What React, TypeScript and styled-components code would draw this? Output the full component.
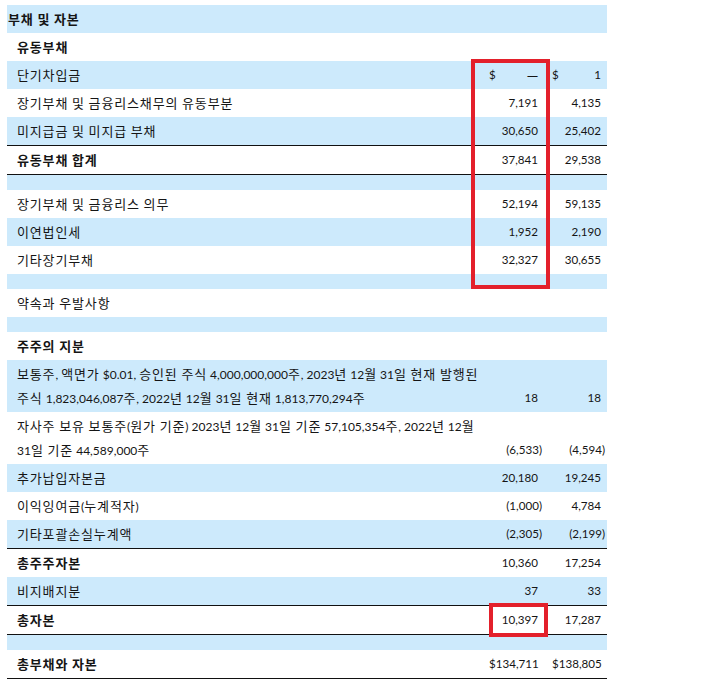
import styled, { createGlobalStyle, css } from "styled-components";

const GlobalStyle = createGlobalStyle`
  body {
    margin: 0;
    background: #ffffff;
    font-family: "Noto Sans CJK KR", "Noto Sans", sans-serif;
    color: #151515;
  }
`;

const BLUE = "#cdeafc";

type Row = {
  label?: string[];
  a?: string;
  b?: string;
  tone: "blue" | "white";
  bold?: boolean;
  top?: boolean;
  line?: "single" | "double";
  spacer?: boolean;
  dollar?: boolean;
};

const rows: Row[] = [
  { label: ["부채 및 자본"], tone: "blue", bold: true, top: true },
  { label: ["유동부채"], tone: "white", bold: true },
  { label: ["단기차입금"], a: "—", b: "1", tone: "blue", dollar: true },
  { label: ["장기부채 및 금융리스채무의 유동부분"], a: "7,191", b: "4,135", tone: "white" },
  { label: ["미지급금 및 미지급 부채"], a: "30,650", b: "25,402", tone: "blue", line: "single" },
  { label: ["유동부채 합계"], a: "37,841", b: "29,538", tone: "white", bold: true, line: "single" },
  { tone: "blue", spacer: true },
  { label: ["장기부채 및 금융리스 의무"], a: "52,194", b: "59,135", tone: "white" },
  { label: ["이연법인세"], a: "1,952", b: "2,190", tone: "blue" },
  { label: ["기타장기부채"], a: "32,327", b: "30,655", tone: "white" },
  { tone: "blue", spacer: true },
  { label: ["약속과 우발사항"], tone: "white" },
  { tone: "blue", spacer: true },
  { label: ["주주의 지분"], tone: "white", bold: true },
  {
    label: [
      "보통주, 액면가 $0.01, 승인된 주식 4,000,000,000주, 2023년 12월 31일 현재 발행된",
      "주식 1,823,046,087주, 2022년 12월 31일 현재 1,813,770,294주",
    ],
    a: "18",
    b: "18",
    tone: "blue",
  },
  {
    label: [
      "자사주 보유 보통주(원가 기준) 2023년 12월 31일 기준 57,105,354주, 2022년 12월",
      "31일 기준 44,589,000주",
    ],
    a: "(6,533)",
    b: "(4,594)",
    tone: "white",
  },
  { label: ["추가납입자본금"], a: "20,180", b: "19,245", tone: "blue" },
  { label: ["이익잉여금(누계적자)"], a: "(1,000)", b: "4,784", tone: "white" },
  { label: ["기타포괄손실누계액"], a: "(2,305)", b: "(2,199)", tone: "blue", line: "single" },
  { label: ["총주주자본"], a: "10,360", b: "17,254", tone: "white", bold: true },
  { label: ["비지배지분"], a: "37", b: "33", tone: "blue", line: "single" },
  { label: ["총자본"], a: "10,397", b: "17,287", tone: "white", bold: true, line: "single" },
  { tone: "blue", spacer: true },
  { label: ["총부채와 자본"], a: "$134,711", b: "$138,805", tone: "white", bold: true, line: "double" },
];

const Page = styled.div`
  padding: 5px 0 0 7px;
  position: relative;
`;

const Sheet = styled.div`
  width: 600px;
  display: flex;
  flex-direction: column;
`;

const RowBox = styled.div<{ $tone: "blue" | "white"; $line?: "single" | "double"; $spacer?: boolean }>`
  display: grid;
  grid-template-columns: 464px 79px 57px;
  background: ${(p) => (p.$tone === "blue" ? BLUE : "#ffffff")};
  min-height: ${(p) => (p.$spacer ? "15px" : "28px")};
  ${(p) =>
    p.$line === "single" &&
    css`
      border-bottom: 1px solid #111;
    `}
  ${(p) =>
    p.$line === "double" &&
    css`
      border-bottom: 4px double #111;
    `}
`;

const Label = styled.div<{ $bold?: boolean; $top?: boolean }>`
  padding: 2px 0 2px ${(p) => (p.$top ? "1px" : "10px")};
  font-size: 13px;
  line-height: 24px;
  font-weight: ${(p) => (p.$bold ? 700 : 400)};
  white-space: nowrap;
  letter-spacing: 0.85px;
  min-width: 0;
`;

const Line = styled.div`
  height: 24px;
`;

const Latin = styled.span`
  font-family: "Lato", "Noto Sans", sans-serif;
  font-size: 12px;
  letter-spacing: 0;
  line-height: 1;
`;

const Value = styled.div<{ $pad: number; $lead: number }>`
  display: flex;
  align-items: flex-end;
  justify-content: space-between;
  padding: 2px ${(p) => p.$pad}px 2px ${(p) => p.$lead}px;
  font-family: "Lato", "Noto Sans", sans-serif;
  font-size: 11.6px;
  line-height: 24px;
  color: #151515;
  white-space: nowrap;
`;

const Amount = styled.span<{ $neg?: boolean; $dash?: boolean }>`
  margin-left: auto;
  margin-right: ${(p) => (p.$neg ? "-4px" : "0")};
  ${(p) =>
    p.$dash &&
    css`
      font-family: "Noto Sans", sans-serif;
      font-size: 11px;
    `}
`;

const Mark = styled.div<{ $x: number; $y: number; $w: number; $h: number }>`
  position: absolute;
  left: ${(p) => p.$x}px;
  top: ${(p) => p.$y}px;
  width: ${(p) => p.$w}px;
  height: ${(p) => p.$h}px;
  border: 4px solid #e3202b;
  box-sizing: border-box;
  pointer-events: none;
`;

function Text({ value }: { value: string }) {
  const parts = value.split(/([\x20-\x7E]+)/).filter(Boolean);
  return (
    <Line>
      {parts.map((p, i) =>
        /^[\x20-\x7E]+$/.test(p) && /[^ ]/.test(p) ? <Latin key={i}>{p}</Latin> : <span key={i}>{p}</span>
      )}
    </Line>
  );
}

function Cell({ value, dollar, pad, lead }: { value?: string; dollar?: boolean; pad: number; lead: number }) {
  return (
    <Value $pad={pad} $lead={lead}>
      {dollar && <span>$</span>}
      {value && (
        <Amount $neg={value.startsWith("(")} $dash={value === "—"}>
          {value}
        </Amount>
      )}
    </Value>
  );
}

export default function App() {
  return (
    <>
      <GlobalStyle />
      <Page>
        <Sheet>
          {rows.map((r, i) => (
            <RowBox key={i} $tone={r.tone} $line={r.line} $spacer={r.spacer}>
              {r.spacer ? (
                <>
                  <div />
                  <div />
                  <div />
                </>
              ) : (
                <>
                  <Label $bold={r.bold} $top={r.top}>
                    {r.label?.map((l, j) => (
                      <Text key={j} value={l} />
                    ))}
                  </Label>
                  <Cell value={r.a} dollar={r.dollar} pad={12} lead={18} />
                  <Cell value={r.b} dollar={r.dollar} pad={6} lead={2} />
                </>
              )}
            </RowBox>
          ))}
        </Sheet>
        <Mark $x={471} $y={59} $w={79} $h={230} />
        <Mark $x={489} $y={603} $w={59} $h={34} />
      </Page>
    </>
  );
}
